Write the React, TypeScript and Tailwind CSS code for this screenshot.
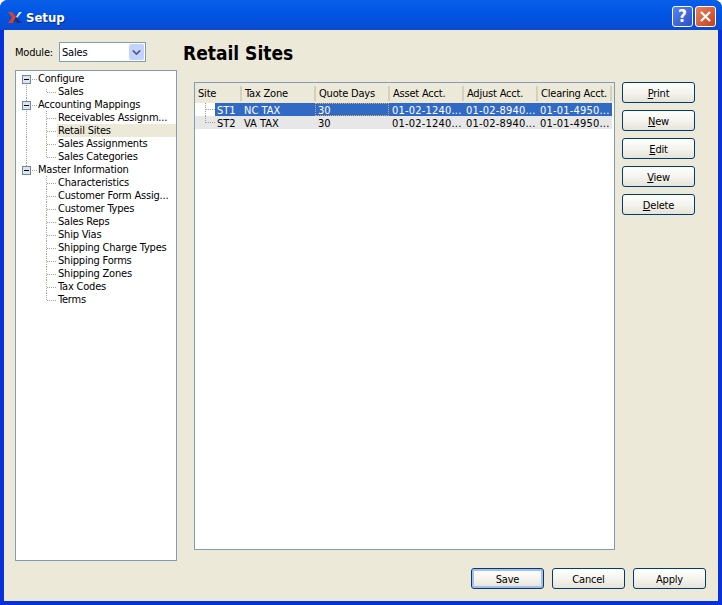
import { ChevronDown } from "lucide-react";

const font = "font-['DejaVu_Sans_Condensed','DejaVu_Sans',sans-serif]";

type TreeRow = { label: string; kind: "root" | "child"; selected?: boolean; trunk?: boolean; first?: boolean; last?: boolean };

const tree: TreeRow[] = [
  { label: "Configure", kind: "root", trunk: true, first: true },
  { label: "Sales", kind: "child", trunk: true, first: true, last: true },
  { label: "Accounting Mappings", kind: "root", trunk: true },
  { label: "Receivables Assignm...", kind: "child", trunk: true, first: true },
  { label: "Retail Sites", kind: "child", trunk: true, selected: true },
  { label: "Sales Assignments", kind: "child", trunk: true },
  { label: "Sales Categories", kind: "child", trunk: true, last: true },
  { label: "Master Information", kind: "root" },
  { label: "Characteristics", kind: "child", first: true },
  { label: "Customer Form Assig...", kind: "child" },
  { label: "Customer Types", kind: "child" },
  { label: "Sales Reps", kind: "child" },
  { label: "Ship Vias", kind: "child" },
  { label: "Shipping Charge Types", kind: "child" },
  { label: "Shipping Forms", kind: "child" },
  { label: "Shipping Zones", kind: "child" },
  { label: "Tax Codes", kind: "child" },
  { label: "Terms", kind: "child", last: true },
];

const columns = ["Site", "Tax Zone", "Quote Days", "Asset Acct.", "Adjust Acct.", "Clearing Acct."];
const rows = [
  ["ST1", "NC TAX", "30", "01-02-1240...", "01-02-8940...", "01-01-4950..."],
  ["ST2", "VA TAX", "30", "01-02-1240...", "01-02-8940...", "01-01-4950..."],
];

function TreeGuide({ row }: { row: TreeRow }) {
  const dot = { stroke: "#a9a793", strokeWidth: 1, strokeDasharray: "1 1" };
  return (
    <svg width="41" height="13" className="shrink-0" shapeRendering="crispEdges">
      {row.kind === "root" ? (
        <>
          {!row.first && <line x1="10.5" y1="0" x2="10.5" y2="3" {...dot} />}
          {row.trunk && <line x1="10.5" y1="11" x2="10.5" y2="13" {...dot} />}
          <line x1="16" y1="7.5" x2="21" y2="7.5" {...dot} />
          <rect x="6.5" y="3.5" width="8" height="8" fill="#dfe3ea" stroke="#6f87a6" />
          <line x1="8" y1="7.5" x2="13" y2="7.5" stroke="#000" />
        </>
      ) : (
        <>
          {row.trunk && <line x1="10.5" y1="0" x2="10.5" y2="13" {...dot} />}
          <line x1="30.5" y1={row.first && row.last ? 4 : 0} x2="30.5" y2={row.last ? 8 : 13} {...dot} />
          <line x1="31" y1="7.5" x2="40" y2="7.5" {...dot} />
        </>
      )}
    </svg>
  );
}

function XpButton({ label, hot, isDefault }: { label: string; hot?: number; isDefault?: boolean }) {
  return (
    <button
      className={`h-[21px] w-[73px] rounded-[3px] border border-[#003c74] bg-gradient-to-b from-white via-[#f5f4ee] to-[#e6e3d8] pt-px text-[11px] leading-none tracking-[-0.2px] text-black ${
        isDefault ? "shadow-[inset_0_0_0_2px_#a5bfea]" : ""
      }`}
    >
      {hot === undefined ? (
        label
      ) : (
        <>
          <span className="underline">{label[hot]}</span>
          {label.slice(hot + 1)}
        </>
      )}
    </button>
  );
}

export default function App() {
  return (
    <div className={`${font} flex h-[605px] w-[722px] flex-col overflow-hidden rounded-t-[8px] bg-[#0831d9] text-[11px] text-black`}>
      {/* title bar */}
      <div className="flex h-[30px] shrink-0 items-center bg-gradient-to-b from-[#0a5fe8] via-[#0054e3] to-[#0a4bd0] pl-[8px] pr-[6px] pt-[3px]">
        <svg width="14" height="11" viewBox="0 0 14 11" className="mt-[1px]">
          <path d="M0 0h4l4 5-3 6H0l4-5.500z" fill="#d8402a" />
          <path d="M8 5l3-5h3L9 6z" fill="#d7e3f7" />
          <path d="M5 11l3-6 2 2 4 4H9L7.500 9z" fill="#1c2f7c" />
        </svg>
        <span className="ml-[4px] mt-[2px] text-[13px] font-bold text-white [text-shadow:1px_1px_0_#0a2a90]">Setup</span>
        <div className="ml-auto flex gap-[2px]">
          <div className="flex h-[21px] w-[21px] items-center justify-center rounded-[3px] border border-white bg-gradient-to-br from-[#5a82ee] to-[#2a50c8] text-[17px] font-bold leading-none text-white">
            ?
          </div>
          <div className="flex h-[21px] w-[21px] items-center justify-center rounded-[3px] border border-white bg-gradient-to-br from-[#e8825f] to-[#c63c18]">
            <svg width="11" height="11" viewBox="0 0 11 11" stroke="#fff" strokeWidth="2.200">
              <path d="M1 1l9 9M10 1l-9 9" />
            </svg>
          </div>
        </div>
      </div>

      {/* client area */}
      <div className="mx-[4px] mb-[4px] flex min-h-0 flex-1 flex-col bg-[#ece9d8] pl-[11px] pr-[12px] pt-[12px]">
        <div className="flex min-h-0 flex-1 gap-[6px]">
          <div className="flex w-[162px] shrink-0 flex-col gap-[8px]">
            <div className="flex h-[20px] items-center tracking-[-0.2px]">
              <span className="w-[44px] pt-[2px]">Module:</span>
              <div className="flex h-[20px] w-[87px] items-center border border-[#7f9db9] bg-white pl-[2px] pr-[1px]">
                <span className="flex-1 pt-[2px]">Sales</span>
                <span className="flex h-[16px] w-[15px] items-center justify-center rounded-[2px] bg-[#c3d3fb]">
                  <ChevronDown size={13} strokeWidth={3} className="text-[#4d6185]" />
                </span>
              </div>
            </div>
            <div className="flex h-[491px] flex-col border border-[#7f9db9] bg-white tracking-[-0.2px]">
              <div className="h-px" />
              {tree.map((row, i) => (
                <div key={i} className="flex h-[13px] items-center leading-[13px]">
                  <div className="flex h-[13px] flex-1 items-center pl-0">
                    <TreeGuide row={row} />
                    <span
                      className={`flex h-[13px] flex-1 items-center ${row.kind === "root" ? "ml-[-19px]" : "pl-[1px]"} ${
                        row.selected ? "bg-[#ece9d8]" : ""
                      }`}
                    >
                      {row.label}
                    </span>
                  </div>
                </div>
              ))}
            </div>
          </div>

          <div className="flex min-w-0 flex-1 flex-col">
            <h1 className="h-[40px] text-[19px] font-bold leading-[22px]">Retail Sites</h1>
            <div className="flex flex-1 gap-[7px] pl-[11px]">
              <div className="flex h-[468px] w-[421px] flex-col border border-[#7f9db9] bg-white">
                <div className="flex h-[20px] items-center bg-[#ece9d8] pr-[2px] tracking-[-0.2px]">
                  {columns.map((c, i) => (
                    <div
                      key={c}
                      className={`flex h-[15px] items-center border-r-2 border-[#d4d0c0] pl-[3px] pt-[2px] ${i === 0 ? "w-[47px]" : "w-[74px]"}`}
                    >
                      {c}
                    </div>
                  ))}
                </div>
                {rows.map((r, ri) => (
                  <div key={r[0]} className={`flex h-[13px] items-center ${ri === 1 ? "mr-[2px] bg-[#e7e7e7]" : "mr-[2px]"}`}>
                    <svg width="20" height="13" className="shrink-0" shapeRendering="crispEdges">
                      <line x1="10.5" y1="0" x2="10.5" y2={ri === 1 ? 7 : 13} stroke="#a0a0a0" strokeDasharray="1 1" />
                      <line x1="11" y1="6.5" x2="20" y2="6.5" stroke="#a0a0a0" strokeDasharray="1 1" />
                    </svg>
                    <div className={`flex h-[13px] flex-1 items-center leading-[15px] ${ri === 0 ? "bg-[#316ac5] text-white" : ""}`}>
                      <span className="h-[13px] w-[27px] pl-[2px]">{r[0]}</span>
                      <span className="h-[13px] w-[73px] pl-[2px]">{r[1]}</span>
                      <span
                        className={`h-[13px] w-[74px] pl-[3px] ${ri === 0 ? "outline-1 -outline-offset-1 outline-dotted outline-[#d9a860]" : ""}`}
                      >
                        {r[2]}
                      </span>
                      <span className="h-[13px] w-[74px] pl-[3px] tracking-[0.2px]">{r[3]}</span>
                      <span className="h-[13px] w-[74px] pl-[3px] tracking-[0.2px]">{r[4]}</span>
                      <span className="h-[13px] w-[74px] pl-[3px] tracking-[0.2px]">{r[5]}</span>
                    </div>
                  </div>
                ))}
              </div>
              <div className="flex flex-col gap-[7px]">
                <XpButton label="Print" hot={0} />
                <XpButton label="New" hot={0} />
                <XpButton label="Edit" hot={0} />
                <XpButton label="View" hot={0} />
                <XpButton label="Delete" hot={0} />
              </div>
            </div>
          </div>
        </div>

        <div className="flex h-[40px] shrink-0 justify-end gap-[8px] pt-[7px]">
          <XpButton label="Save" isDefault />
          <XpButton label="Cancel" />
          <XpButton label="Apply" />
        </div>
      </div>
    </div>
  );
}
